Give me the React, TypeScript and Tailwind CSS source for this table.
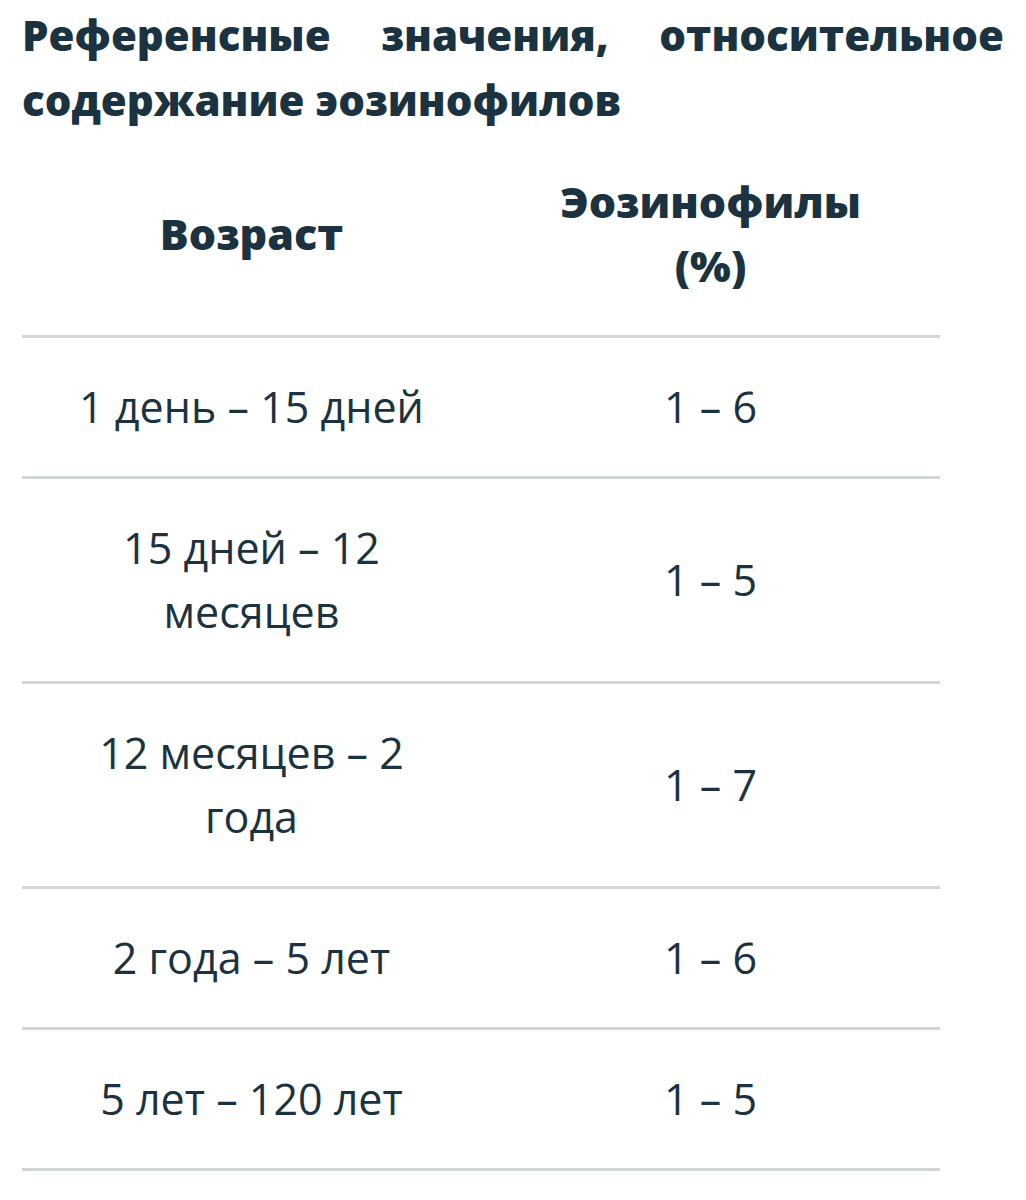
const rows: [string, string][] = [
  ["1 день – 15 дней", "1 – 6"],
  ["15 дней – 12 месяцев", "1 – 5"],
  ["12 месяцев – 2 года", "1 – 7"],
  ["2 года – 5 лет", "1 – 6"],
  ["5 лет – 120 лет", "1 – 5"],
];

export default function App() {
  return (
    <div className="min-h-[1200px] bg-white px-[22px] pt-[2px] text-[#1b3340] font-['Open_Sans',sans-serif]">
      <h2 className="text-justify text-[42px] leading-[65px] font-extrabold">
        Референсные значения, относительное содержание эозинофилов
      </h2>

      <table className="mt-[1px] w-[918px] table-fixed border-collapse text-center">
        <thead>
          <tr className="border-b-[3px] border-[#d2d6d6]">
            <th className="w-1/2 px-6 py-[37px] text-[43px] leading-[64px] font-extrabold">Возраст</th>
            <th className="w-1/2 px-6 py-[37px] text-[43px] leading-[64px] font-extrabold">
              Эозинофилы
              <br />
              (%)
            </th>
          </tr>
        </thead>
        <tbody>
          {rows.map(([age, value]) => (
            <tr key={age} className="border-b-[3px] border-[#d2d6d6]">
              <td className="px-[40px] py-[37px] text-[43px] leading-[64px] font-normal">{age}</td>
              <td className="px-6 py-[37px] text-[43px] leading-[64px] font-normal">{value}</td>
            </tr>
          ))}
        </tbody>
      </table>
    </div>
  );
}
